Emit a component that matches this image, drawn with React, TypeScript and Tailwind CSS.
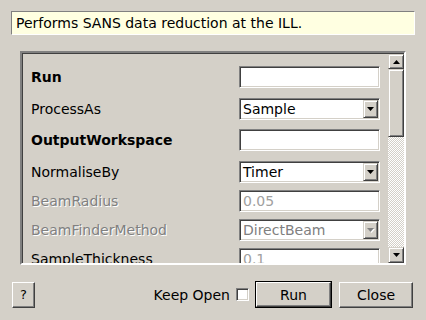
import React from 'react';

const sunken =
  'border border-t-[#808080] border-l-[#808080] border-r-white border-b-white shadow-[inset_1px_1px_0_#404040,inset_-1px_-1px_0_#d4d0c8]';
const raised =
  'border border-t-[#d4d0c8] border-l-[#d4d0c8] border-r-[#404040] border-b-[#404040] shadow-[inset_1px_1px_0_#fff,inset_-1px_-1px_0_#808080]';
const button =
  'border border-t-white border-l-white border-r-[#404040] border-b-[#404040] shadow-[inset_-1px_-1px_0_#808080] bg-[#d4d0c8]';
const disabledText = 'text-[#808080] [text-shadow:1px_1px_0_#fff]';

type Row = {
  label: string;
  bold?: boolean;
  kind: 'text' | 'combo';
  value?: string;
  disabled?: boolean;
  grayValue?: boolean;
  mt: string;
};

const rows: Row[] = [
  { label: 'Run', bold: true, kind: 'text', mt: 'mt-[12px]' },
  { label: 'ProcessAs', kind: 'combo', value: 'Sample', mt: 'mt-[10px]' },
  { label: 'OutputWorkspace', bold: true, kind: 'text', mt: 'mt-[9px]' },
  { label: 'NormaliseBy', kind: 'combo', value: 'Timer', mt: 'mt-[10px]' },
  { label: 'BeamRadius', kind: 'text', value: '0.05', disabled: true, mt: 'mt-[7px]' },
  { label: 'BeamFinderMethod', kind: 'combo', value: 'DirectBeam', disabled: true, mt: 'mt-[7px]' },
  { label: 'SampleThickness', kind: 'text', value: '0.1', grayValue: true, mt: 'mt-[7px]' },
];

function Arrow({ up, disabled }: { up?: boolean; disabled?: boolean }) {
  return (
    <svg width="7" height="4" viewBox="0 0 7 4" className="overflow-visible">
      {disabled && <polygon points="1,1 8,1 4.5,5" fill="#fff" />}
      <polygon
        points={up ? '3.5,0 7,4 0,4' : '0,0 7,0 3.5,4'}
        fill={disabled ? '#808080' : '#000'}
      />
    </svg>
  );
}

function Field({ row }: { row: Row }) {
  if (row.kind === 'combo') {
    return (
      <div className={`w-[141px] h-[22px] bg-white flex items-stretch p-[1px] ${sunken}`}>
        <div className={`flex-1 flex items-center pl-[2px] ${row.disabled ? 'text-[#808080]' : ''}`}>
          {row.value}
        </div>
        <div className={`w-[15px] flex items-center justify-center bg-[#d4d0c8] ${raised}`}>
          <Arrow disabled={row.disabled} />
        </div>
      </div>
    );
  }
  return (
    <div
      className={`w-[141px] h-[22px] bg-white flex items-center pl-[3px] ${sunken} ${
        row.disabled || row.grayValue ? 'text-[#a0a0a0]' : ''
      }`}
    >
      {row.value}
    </div>
  );
}

export default function App() {
  return (
    <div className="w-[426px] h-[320px] bg-[#d4d0c8] font-['DejaVu_Sans',sans-serif] text-[14px] text-black flex flex-col overflow-hidden leading-none">
      <div className="mt-[11px] ml-[11px] w-[404px] h-[24px] bg-[#ffffe1] border border-t-[#808080] border-l-[#808080] border-r-white border-b-white flex items-center pl-[4px]">
        Performs SANS data reduction at the ILL.
      </div>

      <div className="mt-[16px] ml-[20px] w-[386px] h-[214px] border-2 border-t-[#808080] border-l-[#808080] border-r-white border-b-white flex">
        <div className="w-[366px] h-[210px] border-t border-l border-[#404040] border-r-0 border-b-0 overflow-hidden flex flex-col">
          {rows.map((row) => (
            <div key={row.label} className={`flex items-center shrink-0 h-[22px] ${row.mt}`}>
              <div
                className={`w-[216px] pl-[8px] whitespace-nowrap ${row.bold ? 'font-bold' : ''} ${
                  row.disabled ? disabledText : ''
                }`}
              >
                {row.label}
              </div>
              <Field row={row} />
            </div>
          ))}
        </div>
        <div className="w-[16px] h-[210px] flex flex-col border-t border-[#404040]">
          <div className={`h-[15px] shrink-0 flex items-center justify-center bg-[#d4d0c8] ${raised}`}>
            <Arrow up />
          </div>
          <div className={`h-[68px] shrink-0 bg-[#d4d0c8] ${raised}`} />
          <div className="flex-1 bg-[repeating-conic-gradient(#fff_0%_25%,#d4d0c8_0%_50%)] bg-[length:2px_2px]" />
          <div className={`h-[16px] shrink-0 flex items-center justify-center bg-[#d4d0c8] ${raised}`}>
            <Arrow />
          </div>
        </div>
      </div>

      <div className="mt-[16px] flex items-center pl-[12px] pr-[13px]">
        <button className={`w-[23px] h-[26px] flex items-center justify-center text-[13px] ${button}`}>?</button>
        <div className="flex-1" />
        <span>Keep Open</span>
        <div className={`ml-[6px] w-[13px] h-[13px] bg-white ${sunken}`} />
        <div className="ml-[6px] w-[77px] h-[27px] border border-black">
          <button className={`w-full h-full flex items-center justify-center ${button}`}>Run</button>
        </div>
        <button className={`ml-[7px] w-[74px] h-[26px] flex items-center justify-center ${button}`}>Close</button>
      </div>
    </div>
  );
}
